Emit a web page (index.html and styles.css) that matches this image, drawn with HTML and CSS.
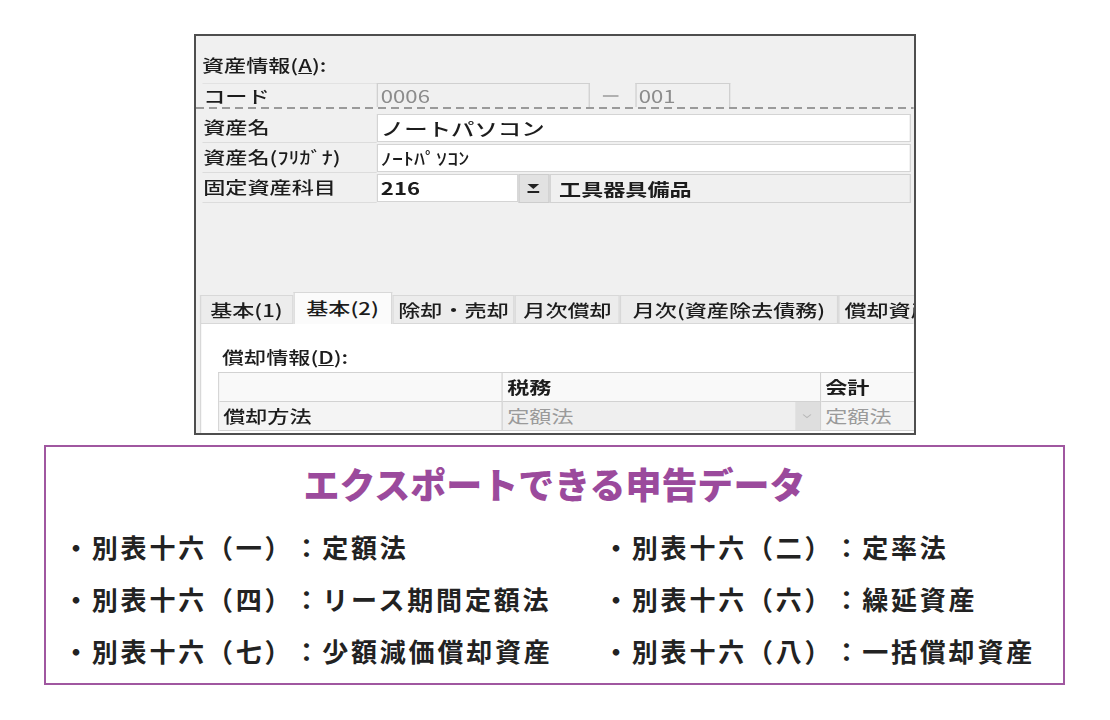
FILE: index.html
```html
<!DOCTYPE html>
<html lang="ja">
<head>
<meta charset="utf-8">
<link rel="stylesheet" href="styles.css">
</head>
<body>
<div class="win">
  <div class="win-inner">
    <div class="sec-title">資産情報(<u>A</u>):</div>
    <div class="code-row">
      <div class="lbl code-lbl">コード</div>
      <div class="box code1">0006</div>
      <div class="dash"></div>
      <div class="box code2">001</div>
    </div>
    <div class="dashline"></div>
    <div class="frow">
      <div class="lbl">資産名</div>
      <div class="val big">ノートパソコン</div>
    </div>
    <div class="frow">
      <div class="lbl">資産名(ﾌﾘｶﾞﾅ)</div>
      <div class="val">ﾉｰﾄﾊﾟｿｺﾝ</div>
    </div>
    <div class="frow">
      <div class="lbl">固定資産科目</div>
      <div class="val num">216</div>
      <div class="ddbtn">
        <svg width="11" height="10" viewBox="0 0 11 10"><polygon points="1,0 10,0 5.5,5" fill="#222"/><rect x="1" y="7" width="9" height="2" fill="#222"/></svg>
      </div>
      <div class="ro">工具器具備品</div>
    </div>
    <div class="tabs">
      <div class="tab t1">基本(1)</div>
      <div class="tab t2 sel">基本(2)</div>
      <div class="tab t3">除却・売却</div>
      <div class="tab t4">月次償却</div>
      <div class="tab t5">月次(資産除去債務)</div>
      <div class="tab t6">償却資産</div>
    </div>
    <div class="panel">
      <div class="sec-title2">償却情報(<u>D</u>):</div>
      <div class="tbl">
        <div class="cell hd"></div>
        <div class="cell hd">税務</div>
        <div class="cell hd">会計</div>
        <div class="cell rl">償却方法</div>
        <div class="cell dis">定額法
          <span class="chev"><svg width="8" height="6" viewBox="0 0 8 6"><polyline points="1,1.5 4,4.5 7,1.5" fill="none" stroke="#b8b8b8" stroke-width="1"/></svg></span>
        </div>
        <div class="cell dis2">定額法</div>
      </div>
    </div>
  </div>
</div>

<div class="export">
  <div class="export-title">エクスポートできる申告データ</div>
  <div class="export-list">
    <div>・別表十六（一）：定額法</div>
    <div>・別表十六（二）：定率法</div>
    <div>・別表十六（四）：リース期間定額法</div>
    <div>・別表十六（六）：繰延資産</div>
    <div>・別表十六（七）：少額減価償却資産</div>
    <div>・別表十六（八）：一括償却資産</div>
  </div>
</div>
</body>
</html>
```

FILE: styles.css
```css
body {
  margin: 0;
  background: #ffffff;
}

.win {
  margin: 34px 0 0 194px;
  width: 718px;
  height: 397px;
  border: 2px solid #4e4e4e;
  background: #f0f0f0;
  overflow: hidden;
}

.win-inner {
  width: 552.3px;
  height: 397px;
  transform: scaleX(1.3);
  transform-origin: 0 0;
  display: flex;
  flex-direction: column;
  font-family: "Noto Sans CJK JP", "Noto Sans", sans-serif;
  font-size: 17px;
  font-weight: 500;
  color: #1c1c1c;
  text-spacing-trim: space-all;
}

.sec-title {
  padding: 19px 0 0 4.6px;
  height: 20px;
  line-height: 20px;
  margin-bottom: 8px;
}

.code-row {
  display: flex;
  height: 24px;
  margin-left: 4.6px;
}

.lbl {
  box-sizing: border-box;
  width: 134.6px;
  flex: none;
  padding-left: 1px;
  line-height: 28px;
  border-bottom: 1px solid #dcdcdc;
  white-space: nowrap;
}

.code-lbl {
  border-top: 1px solid #e2e2e2;
  border-bottom: none;
  line-height: 24px;
}

.box {
  box-sizing: border-box;
  height: 24px;
  border: 1px solid #d0d0d0;
  border-bottom: none;
  color: #8c8c8c;
  line-height: 24px;
  padding-left: 2px;
  font-weight: 400;
}

.code1 {
  width: 163.8px;
}

.dash {
  width: 11.6px;
  height: 1.5px;
  background: #b0b0b0;
  margin: 12px 13px 0 10px;
}

.code2 {
  width: 73.8px;
}

.dashline {
  height: 2px;
  background: repeating-linear-gradient(90deg, #9a9a9a 0 6px, transparent 6px 10px);
  margin-bottom: 4px;
}

.frow {
  display: flex;
  height: 30px;
  margin-left: 4.6px;
}

.val {
  box-sizing: border-box;
  width: 410.8px;
  height: 28px;
  margin-top: 1px;
  background: #ffffff;
  border: 1px solid #d4d4d4;
  padding-left: 2px;
  line-height: 26px;
  white-space: nowrap;
}

.big {
  font-size: 18px;
}

.num {
  width: 108.5px;
  font-weight: 700;
}

.ddbtn {
  box-sizing: border-box;
  width: 24.6px;
  height: 29px;
  margin-top: 1px;
  background: #e2e2e2;
  border: 1px solid #cdcdcd;
  display: flex;
  align-items: center;
  justify-content: center;
}

.ro {
  box-sizing: border-box;
  width: 277.7px;
  height: 29px;
  margin-top: 1px;
  border: 1px solid #d2d2d2;
  padding-left: 6px;
  line-height: 27px;
  font-weight: 700;
  white-space: nowrap;
}

.tabs {
  display: flex;
  align-items: flex-end;
  height: 31px;
  margin-top: 89px;
  padding-left: 3px;
}

.tab {
  box-sizing: border-box;
  height: 28px;
  border: 1px solid #d8d8d8;
  border-bottom: none;
  background: #ececec;
  line-height: 27px;
  text-align: center;
  white-space: nowrap;
  flex: none;
}

.tab.sel {
  height: 32px;
  margin-bottom: -1px;
  background: #fbfbfb;
  position: relative;
  z-index: 1;
  line-height: 30px;
}

.t1 { width: 71.6px; }
.t2 { width: 76.2px; }
.t3 { width: 94.6px; }
.t4 { width: 80.8px; }
.t5 { width: 167.6px; }
.t6 { width: 80px; text-align: left; padding-left: 4px; }

.panel {
  flex: 1;
  margin-left: 3px;
  background: #ffffff;
  border-top: 1px solid #d8d8d8;
  border-left: 1px solid #d8d8d8;
}

.sec-title2 {
  padding: 23px 0 0 16px;
  line-height: 20px;
  height: 20px;
  margin-bottom: 5px;
}

.tbl {
  display: grid;
  grid-template-columns: 218.5px 244.6px 100px;
  grid-auto-rows: 29px;
  margin-left: 12.9px;
  border-top: 1px solid #d2d2d2;
  border-left: 1px solid #d2d2d2;
}

.cell {
  box-sizing: border-box;
  border-right: 1px solid #d2d2d2;
  border-bottom: 1px solid #d2d2d2;
  padding-left: 3px;
  line-height: 28px;
  white-space: nowrap;
  position: relative;
}

.hd {
  background: #f9f9f9;
  font-weight: 700;
}

.rl {
  background: #f4f4f4;
}

.dis {
  background: #efefef;
  color: #9a9a9a;
  font-weight: 400;
}

.dis2 {
  background: #f4f4f4;
  color: #9a9a9a;
  font-weight: 400;
}

.chev {
  position: absolute;
  right: 0;
  top: 0;
  width: 19px;
  height: 28px;
  background: #dedede;
  display: flex;
  align-items: center;
  justify-content: center;
}

.export {
  margin: 10px 0 0 44px;
  width: 1017px;
  height: 236px;
  border: 2px solid #a057a0;
  font-family: "Noto Sans CJK JP", "Noto Sans", sans-serif;
}

.export-title {
  margin-top: 14px;
  text-align: center;
  font-size: 36px;
  line-height: 44px;
  font-weight: 900;
  color: #9b4a9c;
}

.export-list {
  display: grid;
  grid-template-columns: 540px 1fr;
  margin-top: 16px;
  padding-left: 17px;
  font-size: 26px;
  letter-spacing: 2.8px;
  line-height: 52px;
  font-weight: 700;
  color: #222222;
  white-space: nowrap;
  text-spacing-trim: space-all;
}
```
